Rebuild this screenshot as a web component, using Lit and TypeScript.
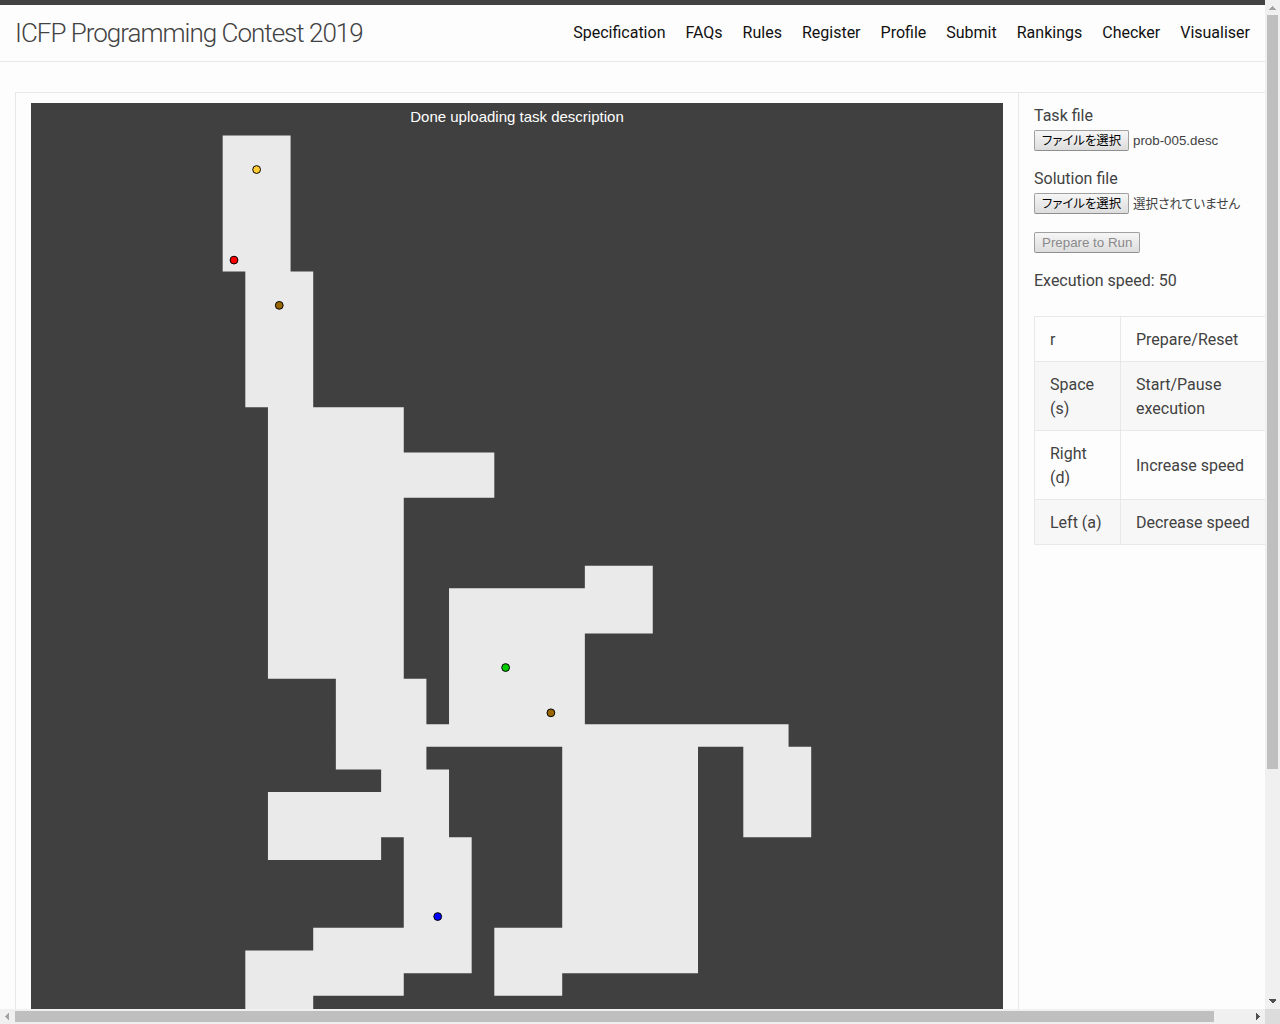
import { LitElement, html, css, svg } from "lit";
import { customElement } from "lit/decorators.js";

const NAV = ["Specification", "FAQs", "Rules", "Register", "Profile", "Submit", "Rankings", "Checker", "Visualiser"];

const KEYS = [
  ["r", "Prepare/Reset"],
  ["Space (s)", "Start/Pause execution"],
  ["Right (d)", "Increase speed"],
  ["Left (a)", "Decrease speed"],
];

// Mine geometry: size of one cell and canvas position of the map's origin.
const CELL = 22.636;
const OX = 191.67;
const OY = 32.6;

const MINE: number[][] = [
  [0, 0], [3, 0], [3, 6], [4, 6], [4, 12], [8, 12], [8, 14], [12, 14], [12, 16], [8, 16], [8, 24],
  [9, 24], [9, 26], [10, 26], [10, 20], [16, 20], [16, 19], [19, 19], [19, 22], [16, 22], [16, 26],
  [25, 26], [25, 27], [26, 27], [26, 31], [23, 31], [23, 27], [21, 27], [21, 37], [15, 37], [15, 38],
  [12, 38], [12, 35], [15, 35], [15, 27], [9, 27], [9, 28], [10, 28], [10, 31], [11, 31], [11, 37],
  [8, 37], [8, 38], [4, 38], [4, 40], [1, 40], [1, 36], [4, 36], [4, 35], [8, 35], [8, 31], [7, 31],
  [7, 32], [2, 32], [2, 29], [7, 29], [7, 28], [5, 28], [5, 24], [2, 24], [2, 12], [1, 12], [1, 6], [0, 6],
];

const ITEMS: { x: number; y: number; color: string }[] = [
  { x: 1, y: 1, color: "#ffcc33" },
  { x: 0, y: 5, color: "#ff0000" },
  { x: 2, y: 7, color: "#996600" },
  { x: 12, y: 23, color: "#00cc00" },
  { x: 14, y: 25, color: "#996600" },
  { x: 9, y: 34, color: "#0000ff" },
];

const px = (v: number) => OX + v * CELL;
const py = (v: number) => OY + v * CELL;

@customElement("mine-canvas")
export class MineCanvas extends LitElement {
  static styles = css`
    :host { display: block; width: 972px; height: 972px; background: #404040; }
    .map { display: block; }
    .status { font: 15px "Liberation Sans", Arial, sans-serif; fill: #fff; text-anchor: middle; }
    .mine { fill: #eaeaea; }
    .item { stroke: #000; stroke-width: 1; }
  `;

  render() {
    return html`<svg class="map" width="972" height="972" viewBox="0 0 972 972">
      <text class="status" x="486" y="19">Done uploading task description</text>
      <polygon class="mine" points=${MINE.map(([x, y]) => `${px(x)},${py(y)}`).join(" ")}></polygon>
      ${ITEMS.map((i) => svg`<circle class="item" cx=${px(i.x + 0.5)} cy=${py(i.y + 0.5)} r="3.9" fill=${i.color}></circle>`)}
    </svg>`;
  }
}

@customElement("app-root")
export class AppRoot extends LitElement {
  static styles = css`
    :host {
      display: grid;
      grid-template-columns: 1265px 15px;
      grid-template-rows: 1009px 15px;
      width: 1280px;
      height: 1024px;
      overflow: hidden;
      font: 400 16px/24px Roboto, sans-serif;
      color: #424242;
      background: #fdfdfd;
    }
    * { box-sizing: border-box; }
    .view { overflow: hidden; min-width: 0; }
    .header {
      display: flex;
      justify-content: space-between;
      height: 62px;
      padding: 1px 15px 0;
      border-top: 5px solid #424242;
      border-bottom: 1px solid #e8e8e8;
      line-height: 54px;
    }
    .title { font-size: 26px; font-weight: 300; letter-spacing: -1px; }
    .nav { display: flex; gap: 20px; }
    .nav a { color: #111; text-decoration: none; }
    .content { padding: 30px 0 0 15px; }
    .panel {
      display: flex;
      width: 1300px;
      height: 1010px;
      border: 1px solid #e8e8e8;
    }
    .stage { flex: none; width: 1003px; padding: 10px 15px; border-right: 1px solid #e8e8e8; }
    .side { flex: none; padding: 11px 15px; }
    .field { height: 63px; }
    .picker { display: flex; gap: 4px; align-items: center; height: 21px; margin-top: 2px; line-height: 15px; }
    .btn {
      flex: none;
      height: 21px;
      padding: 0 7px;
      border: 1px solid #a0a0a0;
      border-radius: 2px;
      border-bottom-color: #8f8f8f;
      background: linear-gradient(#f6f6f6, #dddddd);
      color: #000;
      font: 13.333px/19px "Liberation Sans", "Noto Sans CJK JP", sans-serif;
      white-space: nowrap;
    }
    .file { font: 13.333px/19px "Liberation Sans", "Noto Sans CJK JP", sans-serif; white-space: nowrap; }
    .jp { padding-top: 2px; font-size: 12.6px; line-height: 17px; font-feature-settings: "palt"; }
    .pick { width: 95px; font-size: 12.4px; }
    .run { display: block; width: 106px; margin-top: 2px; color: #8a8a8a; }
    .speed { margin-top: 16px; }
    .keys { width: 246px; margin-top: 23px; border-collapse: collapse; table-layout: fixed; }
    .keys td { padding: 11px 15px 9px; border: 1px solid #e8e8e8; }
    .keys td:first-child { width: 86px; }
    .keys tr:nth-child(even) { background: #f7f7f7; }
    .vbar, .hbar { display: flex; align-items: center; background: #f0f0f0; }
    .vbar { flex-direction: column; }
    .arrow { display: block; flex: none; shape-rendering: crispEdges; }
    .vthumb { width: 11px; height: 754px; background: #bfbfbf; }
    .hthumb { width: 1199px; height: 11px; background: #bfbfbf; }
    .grow { flex: 1; }
    .corner { background: #dcdcdc; }
  `;

  private arrow(points: string, color: string) {
    return html`<svg class="arrow" width="15" height="15" viewBox="0 0 15 15"><polygon points=${points} fill=${color}></polygon></svg>`;
  }

  render() {
    return html`
      <div class="view">
        <header class="header">
          <div class="title">ICFP Programming Contest 2019</div>
          <nav class="nav">${NAV.map((n) => html`<a>${n}</a>`)}</nav>
        </header>
        <main class="content">
          <div class="panel">
            <div class="stage"><mine-canvas></mine-canvas></div>
            <div class="side">
              <div class="field">
                <div>Task file</div>
                <div class="picker"><button class="btn jp pick">ファイルを選択</button><span class="file">prob-005.desc</span></div>
              </div>
              <div class="field">
                <div>Solution file</div>
                <div class="picker"><button class="btn jp pick">ファイルを選択</button><span class="file jp">選択されていません</span></div>
              </div>
              <button class="btn run" disabled>Prepare to Run</button>
              <div class="speed">Execution speed: 50</div>
              <table class="keys">
                <tbody>${KEYS.map(([k, d]) => html`<tr><td>${k}</td><td>${d}</td></tr>`)}</tbody>
              </table>
            </div>
          </div>
        </main>
      </div>
      <div class="vbar">
        ${this.arrow("7.5,5.5 11.5,10 3.5,10", "#a3a3a3")}
        <div class="vthumb"></div>
        <div class="grow"></div>
        ${this.arrow("4,5 11,5 11,6 7.5,9.5 4,6", "#505050")}
      </div>
      <div class="hbar">
        ${this.arrow("5,7.5 9,3.5 9,11.5", "#a3a3a3")}
        <div class="hthumb"></div>
        <div class="grow"></div>
        ${this.arrow("6,4 7,4 10,7.5 7,11 6,11", "#505050")}
      </div>
      <div class="corner"></div>
    `;
  }
}
